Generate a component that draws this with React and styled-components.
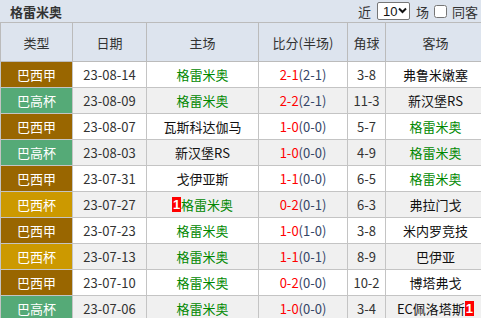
import styled, { createGlobalStyle } from "styled-components";

const GlobalStyle = createGlobalStyle`
  body {
    margin: 0;
    background: #ffffff;
    font-family: "Noto Sans CJK SC", "Noto Sans", sans-serif;
    font-size: 13px;
    color: #333;
  }
`;

const Page = styled.div`
  width: 481px;
  overflow: hidden;
`;

const TitleBar = styled.div`
  display: flex;
  align-items: center;
  justify-content: space-between;
  height: 22px;
  background: #dde4ee;
  padding-left: 10px;
  box-sizing: border-box;
`;

const Title = styled.span`
  font-weight: bold;
  font-size: 13px;
  color: #333;
`;

const Filters = styled.div`
  display: flex;
  align-items: center;
  gap: 4px;
  white-space: nowrap;
  margin-right: -16px;
`;

const SelectWrap = styled.span`
  position: relative;
  display: inline-block;
  margin: 0 2px;
`;

const Select = styled.select`
  appearance: none;
  display: block;
  width: 33px;
  height: 18px;
  font-size: 13px;
  padding: 0 0 0 5px;
  margin: 0;
  border: 1px solid #767676;
  border-radius: 2px;
  background: #fff;
  color: #111;
  font-family: "Liberation Sans", sans-serif;
`;

const Chevron = styled.svg`
  position: absolute;
  right: 3px;
  top: 5px;
  pointer-events: none;
`;

const Check = styled.input`
  width: 13px;
  height: 13px;
  margin: 0 1px;
`;

const Table = styled.table`
  width: 485px;
  table-layout: fixed;
  border-collapse: collapse;
`;

const HeadCell = styled.th`
  height: 38px;
  background: #dde4ee;
  border: 1px solid #bbbbbb;
  font-weight: normal;
  color: #333;
  padding: 0;
`;

const Row = styled.tr`
  background: ${(p) => (p.$alt ? "#f0f0f0" : "#ffffff")};
`;

const Cell = styled.td`
  height: 25px;
  border: 1px solid #c4c4c4;
  text-align: center;
  padding: 0;
  white-space: nowrap;
  color: ${(p) => p.$color || "#333"};
`;

const TypeCell = styled(Cell)`
  background: ${(p) => p.$bg};
  color: #ffffff;
`;

const Score = styled.span`
  color: #ff0000;
`;

const Half = styled.span`
  color: #334466;
`;

const Badge = styled.span`
  display: inline-block;
  background: #ff0000;
  color: #ffffff;
  font-weight: bold;
  font-family: "Liberation Sans", sans-serif;
  line-height: 15px;
  padding: 0 1px;
  vertical-align: 1px;
`;

const LEAGUE = {
  巴西甲: "#996600",
  巴高杯: "#55aa77",
  巴西杯: "#cc9900",
};

const TEAM = "格雷米奥";
const GREEN = "#008800";

const matches = [
  { type: "巴西甲", date: "23-08-14", home: TEAM, score: "2-1", half: "(2-1)", corner: "3-8", away: "弗鲁米嫩塞" },
  { type: "巴高杯", date: "23-08-09", home: TEAM, score: "2-2", half: "(2-1)", corner: "11-3", away: "新汉堡RS" },
  { type: "巴西甲", date: "23-08-07", home: "瓦斯科达伽马", score: "1-0", half: "(0-0)", corner: "5-7", away: TEAM },
  { type: "巴高杯", date: "23-08-03", home: "新汉堡RS", score: "1-0", half: "(0-0)", corner: "4-9", away: TEAM },
  { type: "巴西甲", date: "23-07-31", home: "戈伊亚斯", score: "1-1", half: "(0-0)", corner: "6-5", away: TEAM },
  { type: "巴西杯", date: "23-07-27", home: TEAM, homeBadge: "1", score: "0-2", half: "(0-1)", corner: "6-3", away: "弗拉门戈" },
  { type: "巴西甲", date: "23-07-23", home: TEAM, score: "1-0", half: "(1-0)", corner: "3-8", away: "米内罗竞技" },
  { type: "巴西杯", date: "23-07-13", home: TEAM, score: "1-1", half: "(0-1)", corner: "8-9", away: "巴伊亚" },
  { type: "巴西甲", date: "23-07-10", home: TEAM, score: "0-2", half: "(0-0)", corner: "10-2", away: "博塔弗戈" },
  { type: "巴高杯", date: "23-07-06", home: TEAM, score: "1-0", half: "(0-0)", corner: "3-4", away: "EC佩洛塔斯", awayBadge: "1" },
];

function teamColor(name) {
  return name === TEAM ? GREEN : "#111";
}

function App() {
  return (
    <Page>
      <GlobalStyle />
      <TitleBar>
        <Title>格雷米奥</Title>
        <Filters>
          近
          <SelectWrap>
            <Select defaultValue="10">
              <option value="10">10</option>
              <option value="20">20</option>
            </Select>
            <Chevron width="9" height="7" viewBox="0 0 9 7">
              <path d="M1 1.5 L4.5 5 L8 1.5" fill="none" stroke="#111" strokeWidth="2" />
            </Chevron>
          </SelectWrap>
          场
          <Check type="checkbox" />
          同客
          <Check type="checkbox" />
        </Filters>
      </TitleBar>
      <Table>
        <colgroup>
          <col style={{ width: 72 }} />
          <col style={{ width: 74 }} />
          <col style={{ width: 112 }} />
          <col style={{ width: 89 }} />
          <col style={{ width: 38 }} />
          <col style={{ width: 100 }} />
        </colgroup>
        <thead>
          <tr>
            <HeadCell>类型</HeadCell>
            <HeadCell>日期</HeadCell>
            <HeadCell>主场</HeadCell>
            <HeadCell>比分(半场)</HeadCell>
            <HeadCell>角球</HeadCell>
            <HeadCell>客场</HeadCell>
          </tr>
        </thead>
        <tbody>
          {matches.map((m, i) => (
            <Row key={m.date} $alt={i % 2 === 1}>
              <TypeCell $bg={LEAGUE[m.type]}>{m.type}</TypeCell>
              <Cell>{m.date}</Cell>
              <Cell $color={teamColor(m.home)}>
                {m.homeBadge && <Badge>{m.homeBadge}</Badge>}
                {m.home}
              </Cell>
              <Cell>
                <Score>{m.score}</Score>
                <Half>{m.half}</Half>
              </Cell>
              <Cell>{m.corner}</Cell>
              <Cell $color={teamColor(m.away)}>
                {m.away}
                {m.awayBadge && <Badge>{m.awayBadge}</Badge>}
              </Cell>
            </Row>
          ))}
        </tbody>
      </Table>
    </Page>
  );
}

export default App;
